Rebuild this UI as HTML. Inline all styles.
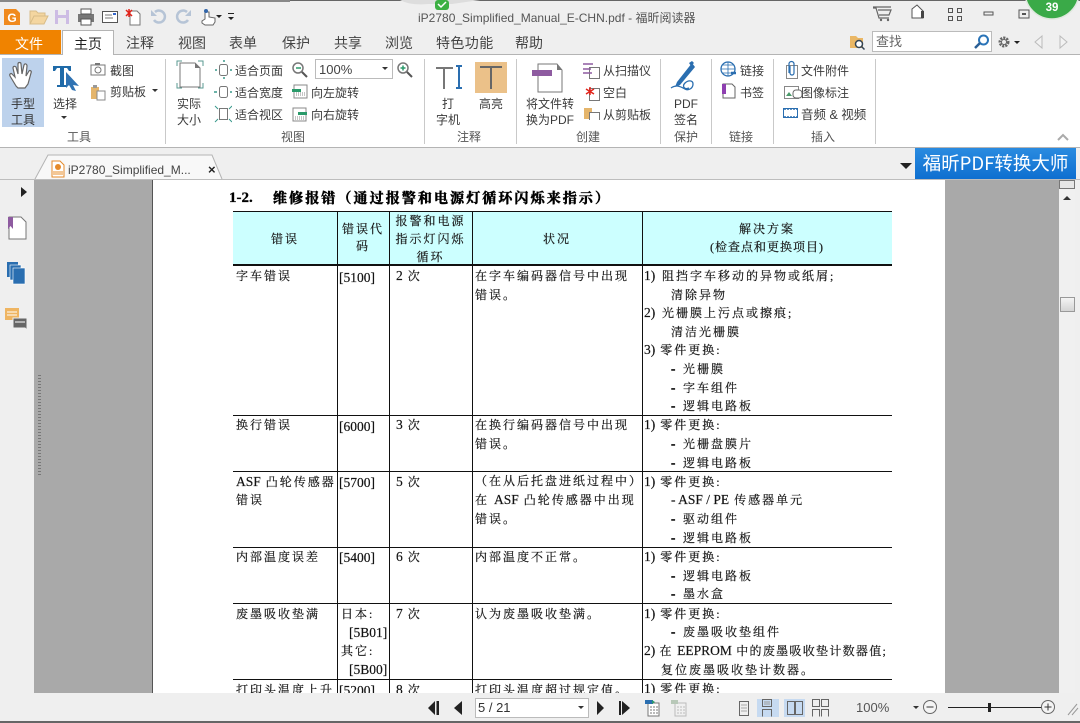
<!DOCTYPE html>
<html lang="zh"><head><meta charset="utf-8"><title>福昕阅读器</title>
<style>
html,body{margin:0;padding:0}
body{width:1080px;height:723px;position:relative;overflow:hidden;background:#efefef;font-family:"Liberation Sans","Noto Sans CJK SC",sans-serif;color:#333}
.a,.t,.d,svg.i{position:absolute}
.t{font-size:12px;line-height:16px;white-space:nowrap;color:#3a3a3a}
.m{font-size:14px;line-height:18px;color:#444}
.c{text-align:center}
.d{font-family:"Liberation Serif","Noto Serif CJK SC",serif;font-size:12px;line-height:16px;letter-spacing:2px;white-space:nowrap;color:#111;-webkit-text-stroke:.2px #222}
.d b{font-weight:400;letter-spacing:0;font-size:13.5px}
.d i{font-style:normal;font-weight:700;display:inline-block;width:12px;letter-spacing:0;font-size:13px;-webkit-text-stroke:.5px #111}
.h{text-align:center;letter-spacing:2px}
.l{position:absolute;background:#111}
.g{position:absolute;background:#c9c9c9;width:1px;top:59px;height:85px}
</style></head><body>

<!-- title bar -->
<div class="a" style="left:0;top:0;width:1080px;height:1px;background:#666"></div>
<div class="a" style="left:0;top:0;width:290px;height:2px;background:#888"></div>
<svg class="i" style="left:0;top:0" width="240" height="30" viewBox="0 0 240 30">
<path d="M4 9h12l4 4v12H4z" fill="#f08a1d"/><text x="12" y="22" text-anchor="middle" fill="#fff" font-size="12" font-weight="700" font-family="Liberation Sans">G</text>
<path d="M30 24V11h6l2 2h7v3H34l-4 8h14l4-8H34" fill="#f4d6a0" stroke="#d8bc88"/>
<rect x="55" y="10" width="14" height="14" fill="#cdbce4"/><rect x="58" y="10" width="8" height="5" fill="#eee"/><rect x="58" y="18" width="8" height="6" fill="#eee"/>
<rect x="78" y="14" width="16" height="8" fill="#777"/><rect x="81" y="9" width="10" height="5" fill="#fff" stroke="#555"/><rect x="81" y="19" width="10" height="6" fill="#fff" stroke="#555"/>
<rect x="102.500" y="11.500" width="15" height="11" fill="#fff" stroke="#555"/><path d="M105 15h7M105 18h8" stroke="#777"/><rect x="113" y="13" width="3" height="2" fill="#36c"/>
<path d="M130 11h7l3 3v11h-10z" fill="#fff" stroke="#777"/><path d="M129 9v8M126 10l6 6M132 10l-6 6" stroke="#e2231a" stroke-width="1.500"/>
<path d="M154 20a6 6 0 1 0 1-8" fill="none" stroke="#b6c4d6" stroke-width="2.500"/><path d="M151 10v6h6z" fill="#b6c4d6"/>
<path d="M188 20a6 6 0 1 1-1-8" fill="none" stroke="#b6c4d6" stroke-width="2.500"/><path d="M191 10v6h-6z" fill="#b6c4d6"/>
<path d="M205 12v7l-3 2v2l3 2h8l2-3v-4l-6-1v-5z" fill="#fff" stroke="#666"/><circle cx="206" cy="11" r="2" fill="#36a"/>
<path d="M216 15h6l-3 3zM228 17h6l-3 3z" fill="#222"/><path d="M228 13.500h6" stroke="#222"/>
</svg>
<div class="t" style="left:418px;top:10px;color:#555">iP2780_Simplified_Manual_E-CHN.pdf - 福昕阅读器</div>
<svg class="i" style="left:400px;top:0" width="80" height="12"><path d="M0 0C8 4 16 5 28 4H52L80 0z" fill="#ddd"/><rect x="35" y="0" width="14" height="10" rx="3" fill="#3cb043"/><path d="M38 4l3 3 5-5" stroke="#fff" stroke-width="1.500" fill="none"/></svg>
<svg class="i" style="left:870px;top:0" width="210" height="30">
<g transform="translate(-3 0)"><path d="M6 8h3l3 10h10M11 10h13l-2 5H12M6 7l18 0" fill="none" stroke="#666" stroke-width="1.200"/><circle cx="14" cy="20" r="1.200" fill="#666"/><circle cx="21" cy="20" r="1.200" fill="#666"/></g>
<path d="M42 9l5-4 6 6v7H42z" fill="#fff" stroke="#555"/><rect x="51" y="11" width="3" height="7" fill="#444"/>
<path d="M78.500 8.500h4v4h-4zM87.500 8.500h4v4h-4zM78.500 16.500h4v4h-4zM87.500 16.500h4v4h-4z" fill="none" stroke="#555"/>
<rect x="114" y="12" width="9" height="3" fill="none" stroke="#555"/>
<rect x="149" y="10" width="10" height="8" fill="none" stroke="#555"/><rect x="152" y="13" width="4" height="2" fill="#555"/>
<circle cx="182" cy="-8" r="27" fill="#3aaa48" stroke="#dfe8de" stroke-width="1.500"/>
<text x="182" y="11" text-anchor="middle" fill="#fff" font-size="11.500" font-weight="700" font-family="Liberation Sans">39</text>
</svg>

<!-- menu tabs -->
<div class="a" style="left:0;top:54px;width:1080px;height:1px;background:#b4b4b4"></div>
<div class="a" style="left:0;top:30px;width:61px;height:24px;background:#f08300"></div>
<div class="t m c" style="left:0;top:35px;width:58px;color:#fff">文件</div>
<div class="a" style="left:62px;top:30px;width:52px;height:25px;background:#fff;border:1px solid #b4b4b4;border-bottom:0;box-sizing:border-box"></div>
<div class="t m c" style="left:62px;top:35px;width:52px;color:#222">主页</div>
<div class="t m" style="left:126px;top:34px">注释</div>
<div class="t m" style="left:178px;top:34px">视图</div>
<div class="t m" style="left:229px;top:34px">表单</div>
<div class="t m" style="left:282px;top:34px">保护</div>
<div class="t m" style="left:334px;top:34px">共享</div>
<div class="t m" style="left:385px;top:34px">浏览</div>
<div class="t m" style="left:436px;top:34px;letter-spacing:.4px">特色功能</div>
<div class="t m" style="left:515px;top:34px">帮助</div>
<svg class="i" style="left:848px;top:33px" width="20" height="18"><path d="M2 3h6l2 2h5v10H2z" fill="#eab765"/><circle cx="11" cy="11" r="3.500" fill="#fff" stroke="#345" stroke-width="1.500"/><path d="M13.500 13.500l3 3" stroke="#345" stroke-width="1.500"/></svg>
<div class="a" style="left:872px;top:31px;width:120px;height:21px;background:#fff;border:1px solid #bbb;box-sizing:border-box"></div>
<div class="t" style="left:876px;top:34px;color:#666;font-size:13px">查找</div>
<svg class="i" style="left:972px;top:33px" width="20" height="18"><circle cx="11.500" cy="7" r="4.500" fill="#fff" stroke="#2a74b8" stroke-width="2"/><path d="M8 10l-5 5" stroke="#2a5f96" stroke-width="2.500"/></svg>
<svg class="i" style="left:994px;top:32px" width="86" height="20">
<circle cx="10" cy="10" r="4" fill="none" stroke="#666" stroke-width="3" stroke-dasharray="2 1"/><circle cx="10" cy="10" r="2.500" fill="#efefef" stroke="#666"/>
<path d="M20 9h6l-3 3z" fill="#222"/><path d="M48 4l-7 6 7 6z" fill="#f2f2f2" stroke="#bbb"/><path d="M66 4l7 6-7 6z" fill="#f2f2f2" stroke="#bbb"/>
</svg>

<!-- ribbon -->
<div class="a" style="left:0;top:55px;width:1080px;height:92px;background:#fff"></div>
<div class="a" style="left:0;top:147px;width:1080px;height:1px;background:#b4b4b4"></div>
<div class="a" style="left:2px;top:58px;width:42px;height:69px;background:#bdd2ec"></div>
<svg class="i" style="left:7px;top:61px" width="30" height="32"><path d="M9 25L3 15c-1-2 1-3 2-2l3 3L6 7c0-2 2-2 3-1l2 7 0-10c0-2 3-2 3 0l1 10 2-9c1-2 3-1 3 1l-1 10 3-5c1-1 3 0 2 2l-3 11-3 4H11z" fill="#fff" stroke="#666" stroke-width="1.200"/></svg>
<div class="t c" style="left:2px;top:96px;width:42px;color:#333">手型</div>
<div class="t c" style="left:2px;top:112px;width:42px;color:#333">工具</div>
<svg class="i" style="left:50px;top:61px" width="32" height="32"><path d="M3 5h18v5h-2l-2-3h-3v17h3v2H7v-2h3V7H7l-2 3H3z" fill="#1f6aa8"/><path d="M16 11l13 14-6-1 3 6-4-1-3-5-3 3z" fill="#2f72b2"/></svg>
<div class="t c" style="left:46px;top:96px;width:38px">选择</div>
<div class="a" style="left:61px;top:116px;border:3px solid transparent;border-top:3px solid #333"></div>
<svg class="i" style="left:89px;top:61px" width="18" height="40"><rect x="2" y="4" width="14" height="10" fill="#fff" stroke="#777"/><circle cx="9" cy="9" r="3" fill="none" stroke="#777"/><rect x="6" y="2" width="5" height="2" fill="#777"/><rect x="2" y="26" width="8" height="12" fill="#e5b56b"/><rect x="4" y="24" width="4" height="3" fill="#999"/><rect x="8" y="30" width="8" height="9" fill="#fff" stroke="#888"/></svg>
<div class="t" style="left:110px;top:63px">截图</div>
<div class="t" style="left:110px;top:84px">剪贴板</div>
<div class="a" style="left:152px;top:89px;border:3px solid transparent;border-top:3px solid #333"></div>
<div class="t c" style="left:0;top:129px;width:158px;color:#555">工具</div>
<div class="g" style="left:165px"></div>

<svg class="i" style="left:175px;top:60px" width="30" height="34"><path d="M2 6V1h5M23 1h5v5M2 23v5h5M23 28h5v-5" fill="none" stroke="#5a9a90" stroke-width="1"/><path d="M5 3h15l5 5v19H5z" fill="#fff" stroke="#777"/><path d="M20 3l5 5h-5z" fill="#777"/></svg>
<div class="t c" style="left:169px;top:96px;width:40px">实际</div>
<div class="t c" style="left:169px;top:112px;width:40px">大小</div>
<svg class="i" style="left:214px;top:60px" width="18" height="64"><rect x="5.500" y="4.500" width="8" height="11" rx="2" fill="#fff" stroke="#777"/><path d="M3 10h-2M16 10h2M9 1h2M9 18h2" stroke="#3a9a8c" stroke-width="1.500"/><rect x="5.500" y="26.500" width="8" height="11" rx="2" fill="#fff" stroke="#777"/><path d="M3 32H0M16 32h2" stroke="#3a9a8c" stroke-width="1.500"/><rect x="5.500" y="48.500" width="8" height="11" fill="#fff" stroke="#777"/><path d="M1 46l3 3M18 46l-3 3M1 62l3-3M18 62l-3-3" stroke="#3a9a8c"/></svg>
<div class="t" style="left:235px;top:63px">适合页面</div>
<div class="t" style="left:235px;top:85px">适合宽度</div>
<div class="t" style="left:235px;top:107px">适合视区</div>
<svg class="i" style="left:291px;top:61px" width="18" height="18"><circle cx="7" cy="7" r="5" fill="#fff" stroke="#777" stroke-width="1.500"/><path d="M5 7h5" stroke="#2a9a6a" stroke-width="1.500"/><path d="M11 11l5 5" stroke="#555" stroke-width="2"/></svg>
<svg class="i" style="left:291px;top:83px" width="18" height="42"><rect x="3" y="2" width="13" height="13" fill="#fff" stroke="#888"/><rect x="1" y="6" width="9" height="3" fill="#2a9a6a"/><path d="M5 10h9M5 12h9" stroke="#888" stroke-dasharray="1 1"/><rect x="2" y="25" width="13" height="13" fill="#fff" stroke="#888"/><rect x="7" y="29" width="9" height="3" fill="#2a9a6a"/><path d="M4 34h9M4 36h9" stroke="#888" stroke-dasharray="1 1"/></svg>
<div class="t" style="left:311px;top:85px">向左旋转</div>
<div class="t" style="left:311px;top:107px">向右旋转</div>
<div class="a" style="left:315px;top:59px;width:78px;height:20px;background:#fff;border:1px solid #bbb;box-sizing:border-box"></div>
<div class="t" style="left:319px;top:62px;color:#444;font-size:13px">100%</div>
<div class="a" style="left:382px;top:67px;border:3px solid transparent;border-top:3px solid #333"></div>
<svg class="i" style="left:396px;top:61px" width="18" height="18"><circle cx="7" cy="7" r="5" fill="#fff" stroke="#777" stroke-width="1.500"/><path d="M4.500 7h5M7 4.500v5" stroke="#2a9a6a" stroke-width="1.500"/><path d="M11 11l5 5" stroke="#555" stroke-width="2"/></svg>
<div class="t c" style="left:168px;top:129px;width:250px;color:#555">视图</div>
<div class="g" style="left:424px"></div>

<svg class="i" style="left:434px;top:62px" width="32" height="30"><path d="M2 6h17M10 6v21" stroke="#777" stroke-width="2" fill="none"/><path d="M22 4h6M25 4v22M22 26h6" stroke="#2a6eb0" stroke-width="2" fill="none"/></svg>
<div class="t c" style="left:428px;top:96px;width:40px">打</div>
<div class="t c" style="left:428px;top:112px;width:40px">字机</div>
<div class="a" style="left:475px;top:62px;width:32px;height:31px;background:#ebc189"></div>
<svg class="i" style="left:475px;top:62px" width="32" height="31"><path d="M5 5h22M16 5v22" stroke="#666" stroke-width="2" fill="none"/></svg>
<div class="t c" style="left:470px;top:96px;width:42px">高亮</div>
<div class="t c" style="left:424px;top:129px;width:90px;color:#555">注释</div>
<div class="g" style="left:516px"></div>

<svg class="i" style="left:532px;top:62px" width="36" height="32"><path d="M6 2h19l5 6v22H6z" fill="#fff" stroke="#777"/><path d="M25 2l5 6h-5z" fill="#777"/><rect x="0" y="8" width="20" height="6" fill="#8e5ba0"/></svg>
<div class="t c" style="left:518px;top:96px;width:64px">将文件转</div>
<div class="t c" style="left:518px;top:112px;width:64px">换为PDF</div>
<svg class="i" style="left:582px;top:60px" width="20" height="60"><rect x="7.500" y="7.500" width="10" height="11" fill="#fff" stroke="#777"/><path d="M1 4h10M1 9h8M1 13h9" stroke="#8e5ba0" stroke-width="1.500"/><rect x="7.500" y="28.500" width="10" height="12" fill="#fff" stroke="#777"/><path d="M8 27v8M4 29l8 5M12 29l-8 5" stroke="#e2231a" stroke-width="1.500"/><rect x="2" y="48" width="8" height="11" fill="#e5b56b"/><rect x="7.500" y="52.500" width="10" height="8" fill="#fff" stroke="#777"/></svg>
<div class="t" style="left:603px;top:63px">从扫描仪</div>
<div class="t" style="left:603px;top:85px">空白</div>
<div class="t" style="left:603px;top:107px">从剪贴板</div>
<div class="t c" style="left:518px;top:129px;width:140px;color:#555">创建</div>
<div class="g" style="left:660px"></div>

<svg class="i" style="left:669px;top:60px" width="34" height="34"><path d="M23 3L8 22l-2 5 5-2L26 7z" fill="#2a6eb0"/><path d="M20 3l3-2 2 2-3 3z" fill="#2a6eb0"/><path d="M2 28c6-4 10-1 14 1s8-1 8-5-5-4-8-1-1 7 4 5" fill="none" stroke="#2a6eb0" stroke-width="1.300"/></svg>
<div class="t c" style="left:665px;top:96px;width:42px">PDF</div>
<div class="t c" style="left:665px;top:112px;width:42px">签名</div>
<div class="t c" style="left:665px;top:129px;width:42px;color:#555">保护</div>
<div class="g" style="left:711px"></div>

<svg class="i" style="left:720px;top:60px" width="18" height="40"><circle cx="8" cy="9" r="7" fill="#fff" stroke="#2a6eb0" stroke-width="1.300"/><path d="M1 9h14M8 2v14M3 5h10M3 13h10" stroke="#2a6eb0" stroke-width=".8"/><path d="M11 13h5" stroke="#2a6eb0" stroke-width="2.500"/><path d="M3 24h9l3 3v11H3z" fill="#fff" stroke="#666"/><rect x="2" y="24" width="4" height="10" fill="#8e3fb0"/></svg>
<div class="t" style="left:740px;top:63px">链接</div>
<div class="t" style="left:740px;top:85px">书签</div>
<div class="t c" style="left:716px;top:129px;width:50px;color:#555">链接</div>
<div class="g" style="left:773px"></div>

<svg class="i" style="left:781px;top:60px" width="28" height="64"><rect x="5.500" y="5.500" width="11" height="13" fill="#fff" stroke="#888"/><path d="M8 13V4a2.500 2.500 0 0 1 5 0v9a2 2 0 0 1-4 0V6" fill="none" stroke="#2a6eb0" stroke-width="1.200"/><rect x="3.500" y="26.500" width="14" height="12" fill="#fff" stroke="#888"/><path d="M5 36l3-4 3 4z" fill="#4a9a6a"/><rect x="12" y="30" width="9" height="8" rx="3" fill="#fff" stroke="#666"/><rect x="2.500" y="48.500" width="14" height="9" fill="#fff" stroke="#2a6eb0"/><path d="M3 49h14M3 57h14" stroke="#2a6eb0" stroke-width="1.500" stroke-dasharray="2 1"/></svg>
<div class="t" style="left:801px;top:63px">文件附件</div>
<div class="t" style="left:801px;top:85px">图像标注</div>
<div class="t" style="left:801px;top:107px;font-size:12.500px">音频 &amp; 视频</div>
<div class="t c" style="left:775px;top:129px;width:96px;color:#555">插入</div>
<div class="g" style="left:875px"></div>
<svg class="i" style="left:1056px;top:132px" width="14" height="10"><path d="M2 8l5-5 5 5" fill="none" stroke="#aaa" stroke-width="2"/></svg>

<!-- doc tabs -->
<div class="a" style="left:0;top:148px;width:1080px;height:31px;background:#efefef"></div>
<div class="a" style="left:0;top:179px;width:1080px;height:1px;background:#bdbdbd"></div>
<svg class="i" style="left:34px;top:154px" width="196" height="26"><path d="M1 25L14 1h164l10 24" fill="#f8f8f8" stroke="#b4b4b4"/></svg>
<svg class="i" style="left:51px;top:160px" width="14" height="18"><path d="M1 1h8l4 4v12H1z" fill="#fff" stroke="#e58a2a"/><circle cx="7" cy="7" r="3" fill="#e58a2a"/><rect x="2" y="11" width="10" height="4" fill="#f3c796"/></svg>
<div class="t" style="left:68px;top:162px;color:#444">iP2780_Simplified_M...</div>
<div class="t" style="left:208px;top:162px;font-weight:700;color:#222;font-size:13px">×</div>
<div class="a" style="left:900px;top:163px;border:6px solid transparent;border-top:6px solid #222"></div>
<div class="a" style="left:915px;top:148px;width:161px;height:31px;background:linear-gradient(#2a8be0,#0e6fd0);color:#fff;font-family:'Noto Sans CJK SC',sans-serif;font-size:18.500px;line-height:31px;text-align:center;white-space:nowrap">福昕PDF转换大师</div>

<!-- work area -->
<div class="a" style="left:34px;top:180px;width:1025px;height:513px;background:#a9a9a9"></div>
<div class="a" style="left:38px;top:375px;width:3px;height:100px;background:repeating-linear-gradient(#777 0 1px,transparent 1px 3px)"></div>
<div class="a" style="left:152px;top:180px;width:1px;height:513px;background:#555"></div>
<div class="a" style="left:153px;top:180px;width:792px;height:513px;background:#fff"></div>

<!-- left panel -->
<div class="a" style="left:21px;top:187px;border:5px solid transparent;border-left:6px solid #222;border-right:0"></div>
<svg class="i" style="left:4px;top:214px" width="26" height="120"><path d="M5 3h12l5 5v17H5z" fill="#fff" stroke="#777"/><path d="M4 3h5v12l-2.500-3L4 15z" fill="#8e5ba0"/><rect x="3" y="48" width="11" height="15" fill="#2a6eb0"/><rect x="6" y="51" width="11" height="15" fill="#2a6eb0" stroke="#fff" stroke-width=".6"/><rect x="9" y="54" width="12" height="16" fill="#2a6eb0" stroke="#fff" stroke-width=".6"/><rect x="1" y="94" width="14" height="12" fill="#efb562"/><path d="M3 98h10M3 101h10" stroke="#fff"/><path d="M9 104h14v12l-2-2H9z" fill="#666" stroke="#efefef"/><path d="M11 108h10" stroke="#fff"/></svg>

<!-- scrollbar -->
<div class="a" style="left:1059px;top:180px;width:16px;height:513px;background:#f0f0f0"></div>
<div class="a" style="left:1059px;top:180px;width:16px;height:9px;background:#e6e6e6;border:1px solid #777;box-sizing:border-box"></div>
<div class="a" style="left:1063px;top:196px;border:4px solid transparent;border-bottom:4px solid #333;border-top:0"></div>
<div class="a" style="left:1060px;top:297px;width:15px;height:15px;background:linear-gradient(#f4f4f4,#d4d4d4);border:1px solid #999;box-sizing:border-box"></div>
<div class="a" style="left:1075px;top:180px;width:5px;height:513px;background:#efefef"></div>

<!-- document -->
<div class="d" style="left:229px;top:190px;font-weight:700;font-size:15px;letter-spacing:0;color:#000;-webkit-text-stroke:.3px #000">1-2.</div>
<div class="d" style="left:273px;top:192px;font-weight:700;font-size:14px;letter-spacing:2.100px;color:#000;-webkit-text-stroke:.5px #000">维修报错（通过报警和电源灯循环闪烁来指示）</div>

<div class="a" style="left:233px;top:212px;width:659px;height:52px;background:#ccffff"></div>
<div class="l" style="left:233px;top:211px;width:659px;height:1px"></div>
<div class="l" style="left:233px;top:264px;width:659px;height:2px"></div>
<div class="l" style="left:233px;top:415px;width:659px;height:1px"></div>
<div class="l" style="left:233px;top:471px;width:659px;height:1px"></div>
<div class="l" style="left:233px;top:547px;width:659px;height:1px"></div>
<div class="l" style="left:233px;top:603px;width:659px;height:1px"></div>
<div class="l" style="left:233px;top:679px;width:659px;height:1px"></div>
<div class="l" style="left:337px;top:211px;width:1px;height:482px"></div>
<div class="l" style="left:389px;top:211px;width:1px;height:482px"></div>
<div class="l" style="left:472px;top:211px;width:1px;height:482px"></div>
<div class="l" style="left:642px;top:211px;width:1px;height:482px"></div>

<div class="d h" style="left:233px;top:231px;width:104px">错误</div>
<div class="d h" style="left:337px;top:221px;width:52px">错误代</div>
<div class="d h" style="left:337px;top:238px;width:52px">码</div>
<div class="d h" style="left:389px;top:213px;width:83px">报警和电源</div>
<div class="d h" style="left:389px;top:231px;width:83px">指示灯闪烁</div>
<div class="d h" style="left:389px;top:249px;width:83px">循环</div>
<div class="d h" style="left:472px;top:231px;width:170px">状况</div>
<div class="d h" style="left:642px;top:221px;width:250px">解决方案</div>
<div class="d h" style="left:642px;top:239px;width:250px;letter-spacing:1px">(检查点和更换项目)</div>

<div class="d" style="left:236px;top:268px">字车错误</div>
<div class="d" style="left:339px;top:270px"><b>[5100]</b></div>
<div class="d" style="left:396px;top:268px"><b>2</b> 次</div>
<div class="d" style="left:475px;top:268px">在字车编码器信号中出现</div>
<div class="d" style="left:475px;top:287px">错误。</div>

<div class="d" style="left:236px;top:417px">换行错误</div>
<div class="d" style="left:339px;top:419px"><b>[6000]</b></div>
<div class="d" style="left:396px;top:417px"><b>3</b> 次</div>
<div class="d" style="left:475px;top:417px">在换行编码器信号中出现</div>
<div class="d" style="left:475px;top:436px">错误。</div>

<div class="d" style="left:236px;top:474px"><b>ASF</b> 凸轮传感器</div>
<div class="d" style="left:236px;top:492px">错误</div>
<div class="d" style="left:339px;top:475px"><b>[5700]</b></div>
<div class="d" style="left:396px;top:474px"><b>5</b> 次</div>
<div class="d" style="left:475px;top:473px">（在从后托盘进纸过程中）</div>
<div class="d" style="left:475px;top:492px">在 <b>ASF</b> 凸轮传感器中出现</div>
<div class="d" style="left:475px;top:511px">错误。</div>

<div class="d" style="left:236px;top:549px">内部温度误差</div>
<div class="d" style="left:339px;top:550px"><b>[5400]</b></div>
<div class="d" style="left:396px;top:549px"><b>6</b> 次</div>
<div class="d" style="left:475px;top:549px">内部温度不正常。</div>

<div class="d" style="left:236px;top:606px">废墨吸收垫满</div>
<div class="d" style="left:341px;top:606px">日本:</div>
<div class="d" style="left:349px;top:625px"><b>[5B01]</b></div>
<div class="d" style="left:341px;top:643px">其它:</div>
<div class="d" style="left:349px;top:662px"><b>[5B00]</b></div>
<div class="d" style="left:396px;top:606px"><b>7</b> 次</div>
<div class="d" style="left:475px;top:606px">认为废墨吸收垫满。</div>

<div class="d" style="left:236px;top:682px">打印头温度上升</div>
<div class="d" style="left:339px;top:683px"><b>[5200]</b></div>
<div class="d" style="left:396px;top:682px"><b>8</b> 次</div>
<div class="d" style="left:475px;top:682px">打印头温度超过规定值。</div>

<div class="d" style="left:644px;top:268px"><b>1)</b></div><div class="d" style="left:662px;top:268px">阻挡字车移动的异物或纸屑;</div>
<div class="d" style="left:671px;top:287px">清除异物</div>
<div class="d" style="left:644px;top:305px"><b>2)</b></div><div class="d" style="left:662px;top:305px">光栅膜上污点或擦痕;</div>
<div class="d" style="left:671px;top:324px">清洁光栅膜</div>
<div class="d" style="left:644px;top:342px"><b>3)</b> 零件更换:</div>
<div class="d" style="left:671px;top:361px"><i>-</i>光栅膜</div>
<div class="d" style="left:671px;top:380px"><i>-</i>字车组件</div>
<div class="d" style="left:671px;top:398px"><i>-</i>逻辑电路板</div>
<div class="d" style="left:644px;top:417px"><b>1)</b> 零件更换:</div>
<div class="d" style="left:671px;top:436px"><i>-</i>光栅盘膜片</div>
<div class="d" style="left:671px;top:455px"><i>-</i>逻辑电路板</div>
<div class="d" style="left:644px;top:474px"><b>1)</b> 零件更换:</div>
<div class="d" style="left:671px;top:492px"><b>- ASF / PE</b> 传感器单元</div>
<div class="d" style="left:671px;top:511px"><i>-</i>驱动组件</div>
<div class="d" style="left:671px;top:530px"><i>-</i>逻辑电路板</div>
<div class="d" style="left:644px;top:549px"><b>1)</b> 零件更换:</div>
<div class="d" style="left:671px;top:568px"><i>-</i>逻辑电路板</div>
<div class="d" style="left:671px;top:586px"><i>-</i>墨水盒</div>
<div class="d" style="left:644px;top:606px"><b>1)</b> 零件更换:</div>
<div class="d" style="left:671px;top:624px"><i>-</i>废墨吸收垫组件</div>
<div class="d" style="left:644px;top:643px;letter-spacing:1.300px"><b>2)</b> 在 <b>EEPROM</b> 中的废墨吸收垫计数器值;</div>
<div class="d" style="left:661px;top:662px">复位废墨吸收垫计数器。</div>
<div class="d" style="left:644px;top:681px"><b>1)</b> 零件更换:</div>

<!-- status bar -->
<div class="a" style="left:0;top:693px;width:1080px;height:28px;background:#efefef"></div>
<div class="a" style="left:0;top:721px;width:1080px;height:2px;background:#666"></div>
<svg class="i" style="left:425px;top:698px" width="230" height="20">
<path d="M10 3v14L3 10zM14 3v14h-2.500V3z" fill="#222"/><path d="M37 3v14l-8-7z" fill="#222"/>
<path d="M172 3l7 7-7 7zM197 3l8 7-8 7zM194 3v14h2V3z" fill="#222"/>
</svg>
<div class="a" style="left:475px;top:698px;width:114px;height:20px;background:#fff;border:1px solid #bbb;box-sizing:border-box"></div>
<div class="t" style="left:478px;top:700px;color:#333;font-size:13px">5 / 21</div>
<div class="a" style="left:578px;top:706px;border:3px solid transparent;border-top:3px solid #333"></div>
<svg class="i" style="left:644px;top:698px" width="46" height="20"><rect x="4" y="5" width="11" height="13" fill="#fff" stroke="#777"/><path d="M6 9h8M6 12h8M6 15h8" stroke="#777" stroke-dasharray="2 1"/><path d="M1 2h8v4H1z" fill="#2a6eb0"/><path d="M8 2l3 2-3 2z" fill="#2a9a6a"/><rect x="31" y="5" width="11" height="13" fill="#f0f0f0" stroke="#bbb"/><path d="M33 9h8M33 12h8M33 15h8" stroke="#bbb" stroke-dasharray="2 1"/><path d="M27 2h7v4h-7z" fill="#b8c8b8"/></svg>
<div class="a" style="left:757px;top:699px;width:22px;height:18px;background:#c6daf1"></div>
<div class="a" style="left:784px;top:699px;width:21px;height:18px;background:#c6daf1"></div>
<svg class="i" style="left:735px;top:698px" width="100" height="20" fill="none" stroke="#666">
<rect x="4.500" y="3.500" width="9" height="14"/><path d="M6 7h6M6 10h6M6 13h6" stroke="#aaa"/>
<path d="M27.500 1.500h9v7h-9zM27.500 18.500v-7h9v7"/><path d="M29 4h6M29 6h6" stroke="#999"/>
<rect x="52.500" y="3.500" width="7" height="13"/><rect x="60.500" y="3.500" width="7" height="13"/>
<path d="M77.500 1.500h7v7h-7zM86.500 1.500h7v7h-7zM77.500 18.500v-7h7v7M86.500 18.500v-7h7v7"/>
</svg>
<div class="t" style="left:856px;top:700px;color:#555;font-size:13px">100%</div>
<div class="a" style="left:913px;top:706px;border:3px solid transparent;border-top:3px solid #333"></div>
<svg class="i" style="left:921px;top:698px" width="159" height="20"><circle cx="9" cy="9" r="6.500" fill="#f4f4f4" stroke="#666"/><path d="M5.500 9h7" stroke="#333"/><path d="M27 9.500h99" stroke="#222"/><rect x="67" y="5" width="3" height="9" fill="#222"/><circle cx="127" cy="9" r="6.500" fill="#f4f4f4" stroke="#666"/><path d="M123.500 9h7M127 5.500v7" stroke="#333"/><path d="M147 17l9-11M151 17l6-7" stroke="#999"/></svg>
</body></html>
